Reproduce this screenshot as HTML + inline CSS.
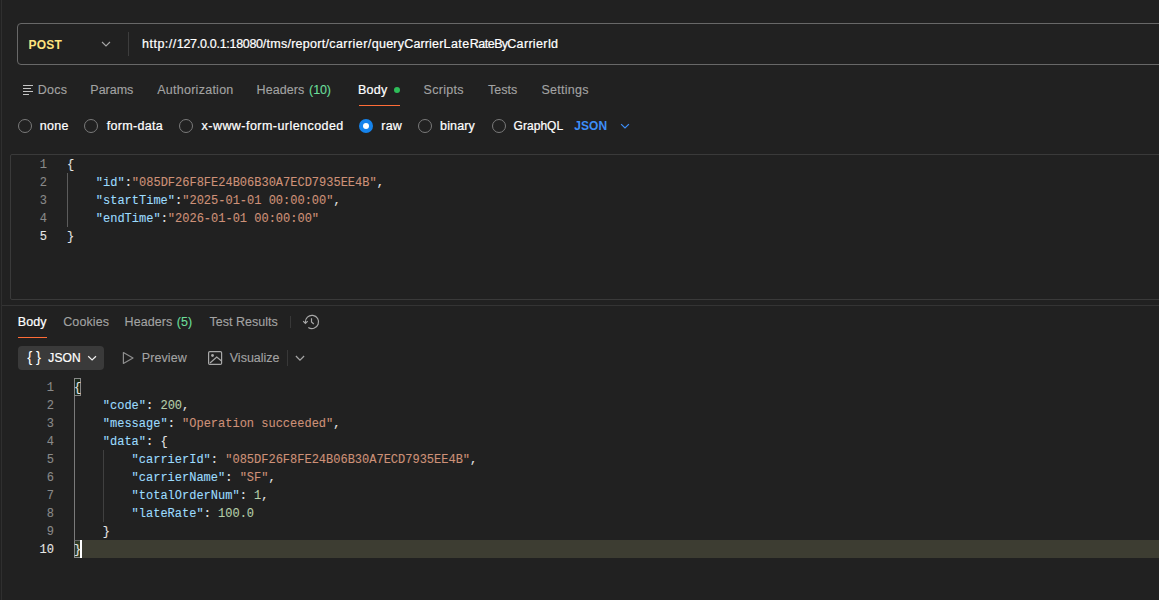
<!DOCTYPE html>
<html><head><meta charset="utf-8"><title>Postman</title>
<style>
*{box-sizing:border-box;margin:0;padding:0}
html,body{width:1159px;height:600px;overflow:hidden;background:#212121;}
body{position:relative;font-family:"Liberation Sans",Arial,sans-serif;font-size:12.5px;color:#fff;-webkit-text-stroke:0.22px;}
.abs{position:absolute;white-space:nowrap}
.t{position:absolute;white-space:nowrap;line-height:16px;height:16px}
.g{color:#a3a3a3;-webkit-text-stroke:0.12px}
.gr{color:#6bdd9a}
.mono{-webkit-text-stroke:0.1px;font-family:"Liberation Mono","DejaVu Sans Mono",monospace;font-size:12px;line-height:18px;white-space:pre}
.ln{position:absolute;text-align:right;color:#8a8a8a}.ln b{font-weight:normal;color:#e6e6e6}
.k{color:#9cdcfe}.s{color:#ce9178}.n{color:#b5cea8}.p{color:#e4e4e4}
.radio{position:absolute;width:14px;height:14px;border:1px solid #7a7a7a;border-radius:50%}
</style></head><body>
<!-- left strip -->
<div class="abs" style="left:1px;top:0;width:1px;height:600px;background:#2f2f2f"></div>

<!-- URL bar -->
<div class="abs" style="left:17px;top:23px;width:1160px;height:42px;border:1px solid #686868;border-radius:4px"></div>
<div class="t" id="post" style="-webkit-text-stroke:0;font-size:12px;letter-spacing:0.15px;left:28.6px;top:37px;font-weight:bold;color:#ffe47e">POST</div>
<svg class="abs" style="left:101px;top:40px" width="10" height="8" viewBox="0 0 10 8"><path d="M1 2 L5 6 L9 2" fill="none" stroke="#a6a6a6" stroke-width="1.1"/></svg>
<div class="abs" style="left:128px;top:32px;width:1px;height:24px;background:#3d3d3d"></div>
<div class="t" id="url" style="left:142px;top:36px"><span style="letter-spacing:0.503px">http://</span><span style="letter-spacing:-0.292px">127.0.0.1:18080</span><span style="letter-spacing:0.261px">/tms/</span><span style="letter-spacing:0.280px">report/</span><span style="letter-spacing:0.449px">carrier/</span><span style="letter-spacing:0.244px">query</span><span style="letter-spacing:0.142px">Carrier</span><span style="letter-spacing:0.489px">Late</span><span style="letter-spacing:-0.477px">Rate</span><span style="letter-spacing:-0.797px">By</span><span style="letter-spacing:0.328px">Carrier</span><span style="letter-spacing:-0.319px">Id</span></div>

<!-- request tabs -->
<svg class="abs" style="left:22px;top:84px" width="12" height="12" viewBox="0 0 12 12"><path d="M1 1.5H11M1 4.5H9M1 7.5H11M1 10.5H7" fill="none" stroke="#c4c4c4" stroke-width="1"/></svg>
<div class="t g" id="docs" style="letter-spacing:0.299px;left:37.72px;top:82px">Docs</div>
<div class="t g" id="params" style="letter-spacing:-0.005px;left:90.34px;top:82px">Params</div>
<div class="t g" id="auth" style="letter-spacing:0.261px;left:157.23px;top:82px">Authorization</div>
<div class="t g" id="headers" style="letter-spacing:0.09px;left:256.55px;top:82px">Headers <span class="gr" style="margin-left:1.1px;letter-spacing:-0.12px">(10)</span></div>
<div class="t" id="body1" style="letter-spacing:0.280px;left:358.01px;top:82px">Body</div>
<div class="abs" style="left:394px;top:87px;width:6px;height:6px;border-radius:50%;background:#2ebd59"></div>
<div class="abs" style="left:359px;top:105px;width:41px;height:1px;background:#ff6c37"></div>
<div class="t g" id="scripts" style="letter-spacing:0.267px;left:423.59px;top:82px">Scripts</div>
<div class="t g" id="tests" style="letter-spacing:0.067px;left:487.89px;top:82px">Tests</div>
<div class="t g" id="settings" style="letter-spacing:0.248px;left:541.51px;top:82px">Settings</div>

<!-- radios -->
<div class="radio" style="left:18px;top:119px"></div>
<div class="t" id="none" style="letter-spacing:0.314px;left:39.73px;top:118px">none</div>
<div class="radio" style="left:84px;top:119px"></div>
<div class="t" id="formdata" style="letter-spacing:0.328px;left:106.67px;top:118px">form-data</div>
<div class="radio" style="left:179px;top:119px"></div>
<div class="t" id="xwww" style="letter-spacing:0.453px;left:201.58px;top:118px">x-www-form-urlencoded</div>
<div class="radio" style="left:359px;top:119px;border:none;background:#1583ec"></div>
<div class="abs" style="left:363px;top:123px;width:6px;height:6px;border-radius:50%;background:#fff"></div>
<div class="t" id="raw" style="letter-spacing:0.156px;left:381.37px;top:118px">raw</div>
<div class="radio" style="left:418px;top:119px"></div>
<div class="t" id="binary" style="letter-spacing:0.154px;left:440.06px;top:118px">binary</div>
<div class="radio" style="left:492px;top:119px"></div>
<div class="t" id="graphql" style="letter-spacing:0.028px;font-size:12px;left:513.61px;top:118px">GraphQL</div>
<div class="t" id="json1" style="letter-spacing:0.059px;-webkit-text-stroke:0;font-size:12px;left:574.21px;top:118px;color:#3d8ef8;font-weight:bold">JSON</div>
<svg class="abs" style="left:620px;top:122px" width="10" height="8" viewBox="0 0 10 8"><path d="M1.1 2.1 L5 6 L8.9 2.1" fill="none" stroke="#3d8ef8" stroke-width="1.2"/></svg>

<!-- request editor -->
<div class="abs" style="left:10px;top:154px;width:1160px;height:146px;border:1px solid #3a3a3a;border-radius:2px"></div>
<div class="mono ln" id="ln1" style="left:20px;top:156px;width:27px">1
2
3
4
<b>5</b></div>
<div class="abs" style="left:67px;top:173px;width:1px;height:54px;background:#5c5c5c"></div>
<div class="mono abs p" id="code1" style="left:67px;top:156px">{
    <span class="k">"id"</span>:<span class="s">"085DF26F8FE24B06B30A7ECD7935EE4B"</span>,
    <span class="k">"startTime"</span>:<span class="s">"2025-01-01 00:00:00"</span>,
    <span class="k">"endTime"</span>:<span class="s">"2026-01-01 00:00:00"</span>
}</div>

<!-- pane divider -->
<div class="abs" style="left:2px;top:305px;width:1160px;height:1px;background:#343434"></div>

<!-- response tabs -->
<div class="t" id="body2" style="letter-spacing:0.136px;left:17.70px;top:314px">Body</div>
<div class="abs" style="left:18px;top:337px;width:29px;height:1px;background:#ff6c37"></div>
<div class="t g" id="cookies" style="letter-spacing:0.116px;left:63.18px;top:314px">Cookies</div>
<div class="t g" id="headers2" style="letter-spacing:0.06px;left:124.55px;top:314px">Headers <span class="gr" style="margin-left:0.9px;letter-spacing:0.1px">(5)</span></div>
<div class="t g" id="testres" style="letter-spacing:0.017px;left:209.50px;top:314px">Test Results</div>
<div class="abs" style="left:290px;top:316px;width:1px;height:12px;background:#383838"></div>
<svg class="abs" style="left:302px;top:314px" width="18" height="16" viewBox="0 0 18 16"><path d="M3.4 8.5 A6.6 6.6 0 1 1 6.3 13.4 M1.2 7.2 L3.4 9.5 L5.7 7.2 M9.5 4.3 V8 L11.8 10" fill="none" stroke="#a8a8a8" stroke-width="1.2"/></svg>

<!-- response toolbar -->
<div class="abs" style="left:18px;top:346px;width:86px;height:24px;background:#3a3a3a;border-radius:4px"></div>
<div class="t" id="braces" style="left:27.2px;top:348.2px;font-size:15px;line-height:18px;height:18px;-webkit-text-stroke:0;letter-spacing:3.7px">{}</div>
<div class="t" id="json2" style="letter-spacing:0.170px;font-size:12px;left:48.25px;top:350px">JSON</div>
<svg class="abs" style="left:87px;top:354px" width="10" height="8" viewBox="0 0 10 8"><path d="M1.2 2.2 L5.1 6 L9 2.2" fill="none" stroke="#f0f0f0" stroke-width="1.2"/></svg>
<svg class="abs" style="left:121px;top:351px" width="14" height="14" viewBox="0 0 14 14"><path d="M2.4 1.6 L12 7 L2.4 12.4 Z" fill="none" stroke="#8e8e8e" stroke-width="1.2" stroke-linejoin="round"/></svg>
<div class="t g" id="preview" style="letter-spacing:0.104px;left:141.72px;top:350px">Preview</div>
<svg class="abs" style="left:207px;top:350px" width="16" height="16" viewBox="0 0 16 16"><rect x="1.6" y="1.6" width="13" height="12.8" rx="1.2" fill="none" stroke="#a8a8a8" stroke-width="1.2"/><circle cx="5.5" cy="5.5" r="1.4" fill="#a8a8a8"/><path d="M3 13 L9.75 7 L14.5 11" fill="none" stroke="#a8a8a8" stroke-width="1.2"/></svg>
<div class="t g" id="visualize" style="letter-spacing:-0.009px;left:229.77px;top:350px">Visualize</div>
<div class="abs" style="left:287px;top:350px;width:1px;height:16px;background:#383838"></div>
<svg class="abs" style="left:295px;top:354px" width="10" height="8" viewBox="0 0 10 8"><path d="M0.9 2 L5 6.1 L9.1 2" fill="none" stroke="#a6a6a6" stroke-width="1.2"/></svg>

<!-- response editor -->
<div class="abs" style="left:74px;top:540px;width:1090px;height:18px;background:#3d3d32"></div>
<div class="mono ln" id="ln2" style="left:20px;top:379px;width:34px">1
2
3
4
5
6
7
8
9
<b>10</b></div>
<div class="abs" style="left:74px;top:396px;width:1px;height:144px;background:#7a7a7a"></div>
<div class="abs" style="left:103px;top:450px;width:1px;height:72px;background:#404040"></div>
<div class="abs" style="left:74px;top:378px;width:7px;height:18px;border:1px solid #888;background:#1a281a"></div>
<div class="abs" style="left:74px;top:540px;width:7px;height:18px;border:1px solid #888;border-top-color:#666;background:#2e3a26"></div>
<div class="abs" style="left:80px;top:540px;width:2px;height:18px;background:#fff"></div>
<div class="mono abs p" id="code2" style="left:74px;top:379px">{
    <span class="k">"code"</span>: <span class="n">200</span>,
    <span class="k">"message"</span>: <span class="s">"Operation succeeded"</span>,
    <span class="k">"data"</span>: {
        <span class="k">"carrierId"</span>: <span class="s">"085DF26F8FE24B06B30A7ECD7935EE4B"</span>,
        <span class="k">"carrierName"</span>: <span class="s">"SF"</span>,
        <span class="k">"totalOrderNum"</span>: <span class="n">1</span>,
        <span class="k">"lateRate"</span>: <span class="n">100.0</span>
    }
}</div>
</body></html>
